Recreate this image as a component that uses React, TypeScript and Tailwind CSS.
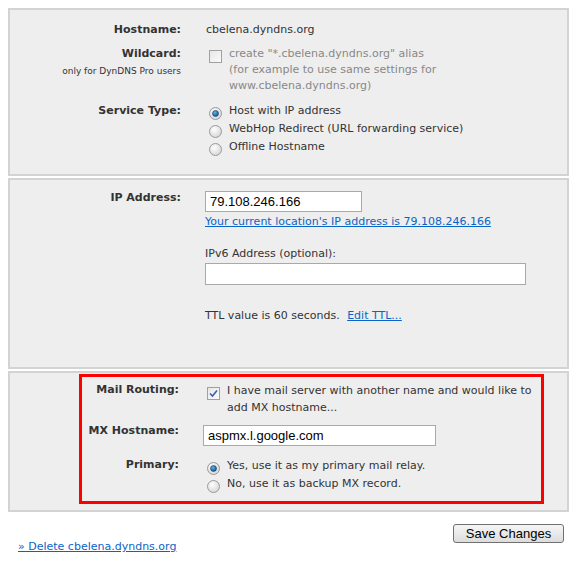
import React from "react";

const font = { fontFamily: '"DejaVu Sans", Tahoma, sans-serif' };
const inputFont = { fontFamily: '"Liberation Sans", Arial, sans-serif' };

function Radio({ checked }: { checked?: boolean }) {
  return (
    <svg width="13" height="13" viewBox="0 0 13 13" className="shrink-0">
      <defs>
        <radialGradient id="ring" cx="0.4" cy="0.35" r="0.7">
          <stop offset="0" stopColor="#ffffff" />
          <stop offset="1" stopColor="#d4d4d4" />
        </radialGradient>
        <radialGradient id="dot" cx="0.4" cy="0.35" r="0.7">
          <stop offset="0" stopColor="#5fb4e8" />
          <stop offset="1" stopColor="#0a4f86" />
        </radialGradient>
      </defs>
      <circle cx="6.5" cy="6.5" r="6" fill="url(#ring)" stroke="#9a9a9a" strokeWidth="1" />
      {checked && <circle cx="6.5" cy="6.5" r="3" fill="url(#dot)" stroke="#1a3f66" strokeWidth="0.6" />}
    </svg>
  );
}

function Checkbox({ checked }: { checked?: boolean }) {
  return (
    <div className="w-[13px] h-[13px] shrink-0 border border-[#a0a0a0] bg-gradient-to-br from-[#e6e6e6] to-[#fbfbfb] flex items-center justify-center">
      {checked && (
        <svg width="9" height="9" viewBox="0 0 9 9">
          <path d="M1 4.5 L3.5 7 L8 1.5" fill="none" stroke="#3d5fa8" strokeWidth="1.6" />
        </svg>
      )}
    </div>
  );
}

function Label({ children, w = "w-[171px]" }: { children: React.ReactNode; w?: string }) {
  return <div className={`${w} shrink-0 text-right font-bold text-[#333]`}>{children}</div>;
}

export default function App() {
  return (
    <div className="w-[577px] h-[561px] bg-white text-[11px] leading-4 text-[#333]" style={font}>
      <div className="pt-2 pl-2 w-[569px] flex flex-col gap-[2px]">
        {/* host settings */}
        <div className="border-2 border-[#d3d3d3] bg-[#eeeeee] pt-[12px] pb-[17px]">
          <div className="flex gap-[25px]">
            <Label>Hostname:</Label>
            <div>cbelena.dyndns.org</div>
          </div>
          <div className="flex gap-[25px] mt-2">
            <div className="w-[171px] shrink-0 text-right">
              <div className="font-bold">Wildcard:</div>
              <div className="text-[9px] leading-[19px]">only for DynDNS Pro users</div>
            </div>
            <div className="flex gap-[7px] text-[#888]">
              <div className="pt-1 pl-[3px]">
                <Checkbox />
              </div>
              <div>
                create "*.cbelena.dyndns.org" alias
                <br />
                (for example to use same settings for
                <br />
                www.cbelena.dyndns.org)
              </div>
            </div>
          </div>
          <div className="flex gap-[25px] mt-[9px]">
            <Label>Service Type:</Label>
            <div className="flex flex-col pl-[3px]">
              {[
                ["Host with IP address", true],
                ["WebHop Redirect (URL forwarding service)", false],
                ["Offline Hostname", false],
              ].map(([t, c]) => (
                <div key={t as string} className="h-[18px] flex items-start gap-[7px]">
                  <div className="pt-[4px]">
                    <Radio checked={c as boolean} />
                  </div>
                  <span>{t}</span>
                </div>
              ))}
            </div>
          </div>
        </div>

        {/* address settings */}
        <div className="border-2 border-[#d3d3d3] bg-[#eeeeee] pt-[11px] h-[191px]">
          <div className="flex gap-[24px]">
            <div className="-mt-[1px]">
              <Label>IP Address:</Label>
            </div>
            <div className="flex flex-col">
              <div className="w-[157px] h-[21px] bg-white border border-[#a9a9a9] px-1 flex items-center text-[13px] text-black" style={inputFont}>
                79.108.246.166
              </div>
              <a className="text-[#0a64c8] underline leading-4 mt-[2px]" href="#">
                Your current location's IP address is 79.108.246.166
              </a>
              <div className="mt-4">IPv6 Address (optional):</div>
              <div className="w-[321px] h-[22px] bg-white border border-[#a9a9a9] mt-[1px]" />
              <div className="mt-[23px]">
                TTL value is 60 seconds.{" "}
                <a href="#" className="text-[#0a64c8] underline ml-1">
                  Edit TTL...
                </a>
              </div>
            </div>
          </div>
        </div>

        {/* mail settings */}
        <div className="border-2 border-[#d3d3d3] bg-[#eeeeee] pt-[1px] pb-[6px]">
          <div className="ml-[69px] w-[465px] border-[3px] border-[#ff0000] pt-[5px] pb-[8px]">
            <div className="flex gap-[25px]">
              <Label w="w-[97px]">Mail Routing:</Label>
              <div className="flex gap-[7px]">
                <div className="pt-[5px] pl-[3px]">
                  <Checkbox checked />
                </div>
                <div className="leading-[17px]">
                  I have mail server with another name and would like to
                  <br />
                  add MX hostname...
                </div>
              </div>
            </div>
            <div className="flex gap-[24px] mt-[9px] items-start">
              <div className="-mt-[2px]">
                <Label w="w-[97px]">MX Hostname:</Label>
              </div>
              <div className="w-[233px] h-[21px] bg-white border border-[#a9a9a9] px-1 flex items-center text-[13px] text-black" style={inputFont}>
                aspmx.l.google.com
              </div>
            </div>
            <div className="flex gap-[25px] mt-[11px]">
              <Label w="w-[97px]">Primary:</Label>
              <div className="flex flex-col pl-[3px]">
                {[
                  ["Yes, use it as my primary mail relay.", true],
                  ["No, use it as backup MX record.", false],
                ].map(([t, c]) => (
                  <div key={t as string} className="h-[18px] flex items-start gap-[7px]">
                    <div className="pt-[5px]">
                      <Radio checked={c as boolean} />
                    </div>
                    <span className="pt-[1px]">{t}</span>
                  </div>
                ))}
              </div>
            </div>
          </div>
        </div>
      </div>

      <div className="flex justify-end pr-[13px] mt-[12px]">
        <button
          className="w-[111px] h-[19px] rounded-[3px] border border-[#707070] bg-gradient-to-b from-[#f6f6f6] to-[#dcdcdc] text-[13px] leading-[17px] text-black"
          style={inputFont}
        >
          Save Changes
        </button>
      </div>
      <div className="pl-[18px] -mt-[4px]">
        <a href="#" className="text-[#0a64c8] underline">
          » Delete cbelena.dyndns.org
        </a>
      </div>
    </div>
  );
}
